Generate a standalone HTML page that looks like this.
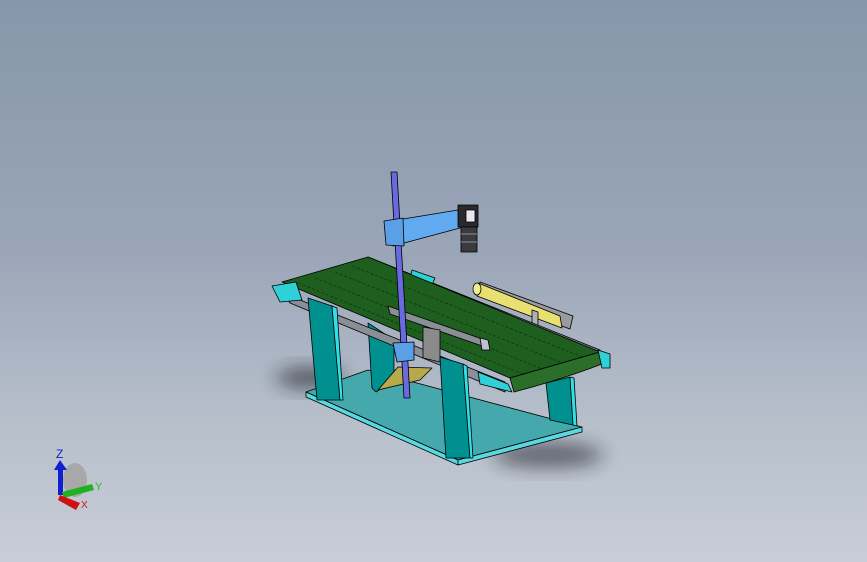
<!DOCTYPE html>
<html><head><meta charset="utf-8"><style>
html,body{margin:0;padding:0}
body{width:867px;height:562px;overflow:hidden;background:linear-gradient(180deg,#8796aa 0%,#9aa6b8 45%,#b7bfcb 75%,#c8ced8 100%)}
svg{position:absolute;left:0;top:0}
text{font-family:"Liberation Sans",sans-serif}
</style></head><body>
<svg width="867" height="562" viewBox="0 0 867 562">
<defs><filter id="b" x="-50%" y="-50%" width="200%" height="200%"><feGaussianBlur stdDeviation="9"/></filter></defs>
<g stroke="#000" stroke-width="0.8" stroke-linejoin="round">
<ellipse cx="310" cy="378" rx="34" ry="11" fill="#1a1f28" opacity=".6" filter="url(#b)" stroke="none"/>
<ellipse cx="548" cy="455" rx="55" ry="13" fill="#1a1f28" opacity=".55" filter="url(#b)" stroke="none"/>
<polygon points="306,392 368,370 582,427 458,460" fill="#45a8ac"/>
<polygon points="306,392 458,460 458,465 306,397" fill="#5ad8e0"/>
<polygon points="458,460 582,427 582,432 458,465" fill="#5ad8e0"/>
<polygon points="546,383 570,377 573,425 550,420" fill="#00908f"/>
<polygon points="570,377 574,378 577,426 573,425" fill="#2fe0e8"/>
<polygon points="368,323 394,340 394,380 376,392 372,388" fill="#00908f"/>
<polygon points="378,390 398,367 432,368 420,380" fill="#b8a94a"/>
<polygon points="480,282 573,316 570,329 477,294" fill="#9a9aa0"/>
<polygon points="478,283 560,316 562,328 477,296" fill="#e8e070"/>
<ellipse cx="477" cy="289" rx="4" ry="6" fill="#f0ec90"/>
<polygon points="532,310 538,312 538,332 532,330" fill="#b0b0b8"/>
<polygon points="368,257 600,350 603,358 372,262" fill="#7a8088"/>
<polygon points="412,270 435,278 432,285 410,279" fill="#2fd0d8"/>
<polygon points="282,282 368,257 600,352 510,378" fill="#1e5e1e"/>
<g stroke="#0a2a0a" stroke-width="0.6" fill="none" stroke-dasharray="3 2">
<line x1="298" y1="283" x2="525" y2="375"/><line x1="315" y1="278" x2="545" y2="370"/>
<line x1="335" y1="272" x2="565" y2="364"/><line x1="352" y1="266" x2="585" y2="358"/>
</g>
<path d="M510,378 L600,352 L602,364 Q560,380 514,392 Z" fill="#2a6e2a"/>
<polygon points="598,350 610,354 610,368 602,368" fill="#2fd0d8"/>
<polygon points="285,294 505,382 505,392 290,303" fill="#8a8e96"/>
<polygon points="272,286 296,282 302,300 280,302" fill="#2fd0d8"/>
<polygon points="478,372 508,384 512,392 480,384" fill="#2fd0d8"/>
<polygon points="388,306 485,340 488,348 390,314" fill="#8a8e96"/>
<polygon points="480,338 488,340 490,350 482,350" fill="#c0c0d0"/>
<polygon points="423,327 440,330 440,362 423,358" fill="#8a8a8a"/>
<polygon points="308,298 332,306 340,400 317,400" fill="#00908f"/>
<polygon points="332,306 337,308 343,400 340,400" fill="#2fe0e8"/>
<polygon points="440,357 463,364 470,458 446,458" fill="#00908f"/>
<polygon points="463,364 467,366 473,458 470,458" fill="#2fe0e8"/>
<polygon points="391,172 397,172 410,398 404,398" fill="#6a6ae0"/>
<polygon points="385,222 458,210 460,228 393,246" fill="#62aaf0"/>
<polygon points="384,221 403,218 404,246 386,245" fill="#5aa0e6"/>
<polygon points="393,343 414,342 414,360 397,362" fill="#5aa0e6"/>
<rect x="458" y="205" width="20" height="22" fill="#2a2a2e"/>
<rect x="466" y="210" width="9" height="12" fill="#e8e8ee"/>
<rect x="461" y="227" width="16" height="25" fill="#3a3a40"/>
<line x1="461" y1="234" x2="477" y2="234" stroke="#aaa"/><line x1="461" y1="242" x2="477" y2="242" stroke="#aaa"/>
</g>
<ellipse cx="75" cy="480" rx="12" ry="17" fill="#a8a8a8"/>
<rect x="58" y="468" width="5" height="27" fill="#1020d0"/>
<polygon points="54,470 60,460 67,470" fill="#1020d0"/>
<polygon points="62,492 92,484 94,490 64,498" fill="#20b020"/>
<polygon points="60,495 80,503 76,510 58,500" fill="#d01010"/>
<text x="56" y="458" font-size="12" fill="#1020d0">Z</text>
<text x="95" y="490" font-size="11" fill="#20c020">Y</text>
<text x="81" y="508" font-size="10" fill="#e01010">X</text>
</svg>
</body></html>
